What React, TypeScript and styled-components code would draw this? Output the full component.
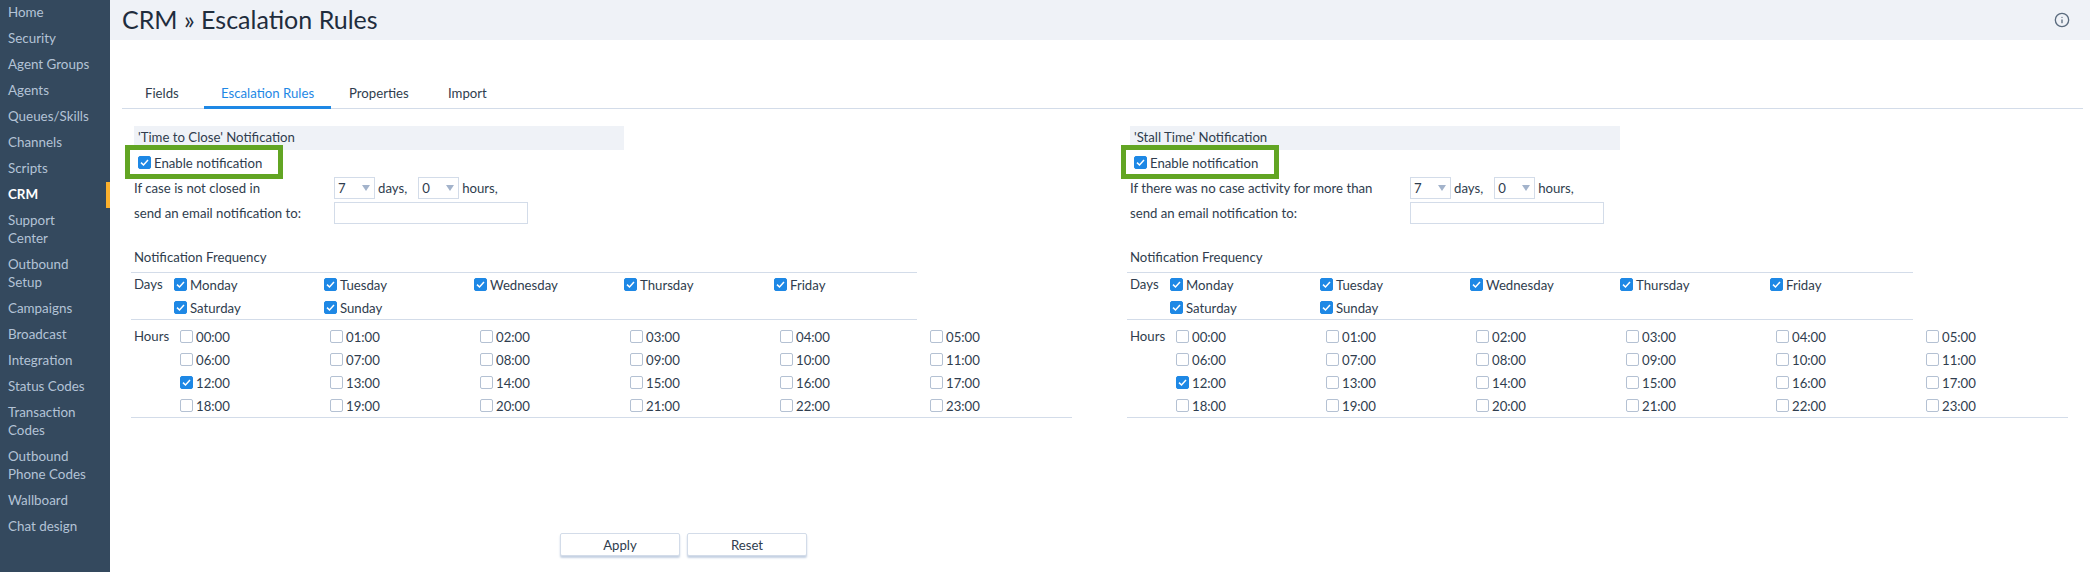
import React from 'react'
import styled, { createGlobalStyle } from 'styled-components'
import { Info } from 'lucide-react'

const GlobalStyle = createGlobalStyle`
  html, body {
    margin: 0;
    height: 100%;
    background: #fff;
    overflow: hidden;
    font-family: Lato, "Noto Sans", sans-serif;
    font-size: 13.2px;
    color: #2f3d4e;
  }
`

const menu = [
  'Home', 'Security', 'Agent Groups', 'Agents', 'Queues/Skills', 'Channels', 'Scripts', 'CRM',
  'Support Center', 'Outbound Setup', 'Campaigns', 'Broadcast', 'Integration', 'Status Codes',
  'Transaction Codes', 'Outbound Phone Codes', 'Wallboard', 'Chat design',
]
const tabs = [
  { label: 'Fields', width: 75 },
  { label: 'Escalation Rules', width: 127 },
  { label: 'Properties', width: 98 },
  { label: 'Import', width: 72 },
]
const days = ['Monday', 'Tuesday', 'Wednesday', 'Thursday', 'Friday', 'Saturday', 'Sunday']
const hours = Array.from({ length: 24 }, (_, i) => `${String(i).padStart(2, '0')}:00`)

const panels = [
  { title: "'Time to Close' Notification", label: 'If case is not closed in', labelWidth: 197 },
  { title: "'Stall Time' Notification", label: 'If there was no case activity for more than', labelWidth: 277 },
]

function Check({ checked }: { checked: boolean }) {
  return (
    <CheckBox $checked={checked}>
      {checked && (
        <svg width="9" height="9" viewBox="0 0 9 9" fill="none">
          <path d="M1 4.6 L3.5 7 L8 2" stroke="#fff" strokeWidth="1.5" />
        </svg>
      )}
    </CheckBox>
  )
}

function Dropdown({ value }: { value: string }) {
  return (
    <SelectBox>
      {value}
      <Caret />
    </SelectBox>
  )
}

function NotificationPanel({ title, label, labelWidth }: { title: string; label: string; labelWidth: number }) {
  return (
    <Panel>
      <Band>{title}</Band>
      <EnableRow>
        <Highlight />
        <Check checked />
        Enable notification
      </EnableRow>
      <FormRow $labelWidth={labelWidth}>
        <span>{label}</span>
        <Dropdown value="7" />
        <span>days,</span>
        <SecondSelect>
          <Dropdown value="0" />
        </SecondSelect>
        <span>hours,</span>
      </FormRow>
      <FormRow $labelWidth={labelWidth}>
        <span>send an email notification to:</span>
        <EmailInput />
      </FormRow>
      <SectionTitle>Notification Frequency</SectionTitle>
      <DaysTable>
        <RowLabel $width={40}>Days</RowLabel>
        <DaysGrid>
          {days.map((d) => (
            <CheckItem key={d}>
              <Check checked />
              {d}
            </CheckItem>
          ))}
        </DaysGrid>
      </DaysTable>
      <HoursTable>
        <RowLabel $width={46}>Hours</RowLabel>
        <HoursGrid>
          {hours.map((h) => (
            <CheckItem key={h}>
              <Check checked={h === '12:00'} />
              {h}
            </CheckItem>
          ))}
        </HoursGrid>
      </HoursTable>
    </Panel>
  )
}

export default function App() {
  return (
    <Page>
      <GlobalStyle />
      <Sidebar>
        {menu.map((item) => (
          <MenuItem key={item} $active={item === 'CRM'}>
            {item}
          </MenuItem>
        ))}
      </Sidebar>
      <Main>
        <Header>
          <Title>CRM » Escalation Rules</Title>
          <Info size={16} color="#5a6b7e" strokeWidth={2} />
        </Header>
        <Tabs>
          {tabs.map((t) => (
            <Tab key={t.label} $active={t.label === 'Escalation Rules'} $width={t.width}>
              {t.label}
            </Tab>
          ))}
        </Tabs>
        <Panels>
          {panels.map((p) => (
            <NotificationPanel key={p.title} {...p} />
          ))}
        </Panels>
        <Buttons>
          <ActionButton>Apply</ActionButton>
          <ActionButton>Reset</ActionButton>
        </Buttons>
      </Main>
    </Page>
  )
}

const Page = styled.div`
  display: flex;
  height: 572px;
`

const Sidebar = styled.nav`
  flex: 0 0 110px;
  background: #34495e;
`

const MenuItem = styled.div<{ $active?: boolean }>`
  padding: 3px 16px 5px 8px;
  line-height: 18px;
  font-size: 13.4px;
  color: ${(p) => (p.$active ? '#fff' : '#b3c3d6')};
  font-weight: ${(p) => (p.$active ? 700 : 400)};
  border-right: 4px solid ${(p) => (p.$active ? '#fbb02d' : 'transparent')};
`

const Main = styled.main`
  flex: 1;
  min-width: 0;
`

const Header = styled.header`
  height: 40px;
  background: #eff2f7;
  display: flex;
  align-items: center;
  justify-content: space-between;
  padding: 0 20px 0 12px;
`

const Title = styled.h1`
  margin: 0;
  padding-bottom: 3px;
  font-size: 25px;
  font-weight: 400;
  color: #1f2d3d;
`

const Tabs = styled.div`
  display: flex;
  gap: 1px;
  margin: 40px 7px 0 12px;
  padding-left: 6px;
  height: 28px;
  border-bottom: 1px solid #d3dce9;
`

const Tab = styled.div<{ $active?: boolean; $width: number }>`
  box-sizing: border-box;
  width: ${(p) => p.$width}px;
  padding-left: 17px;
  line-height: 26px;
  color: ${(p) => (p.$active ? '#1e88e5' : '#2f3d4e')};
  border-bottom: 3px solid ${(p) => (p.$active ? '#1e88e5' : 'transparent')};
  margin-bottom: -1px;
`

const Panels = styled.div`
  display: flex;
  margin-top: 17px;
  padding-left: 21px;
`

const Panel = styled.section`
  flex: 0 0 996px;
`

const Band = styled.div`
  width: 486px;
  height: 24px;
  margin-left: 3px;
  padding-left: 4px;
  line-height: 23px;
  background: #eff2f7;
`

const EnableRow = styled.div`
  position: relative;
  display: flex;
  align-items: center;
  gap: 3px;
  height: 25px;
  margin-left: 7px;
`

const Highlight = styled.div`
  position: absolute;
  left: -13px;
  top: -5px;
  width: 158px;
  height: 34px;
  box-sizing: border-box;
  border: 5px solid #62a523;
`

const CheckBox = styled.span<{ $checked: boolean }>`
  flex: none;
  box-sizing: border-box;
  width: 13px;
  height: 13px;
  display: inline-flex;
  align-items: center;
  justify-content: center;
  border-radius: 2px;
  background: ${(p) => (p.$checked ? '#1e88e5' : '#fff')};
  border: 1px solid ${(p) => (p.$checked ? '#1e88e5' : '#b4c1d3')};
`

const FormRow = styled.div<{ $labelWidth: number }>`
  display: grid;
  grid-template-columns: ${(p) => p.$labelWidth}px auto auto auto auto 1fr;
  align-items: center;
  column-gap: 3px;
  margin-left: 3px;
  height: 25px;
  width: 480px;
`

const SelectBox = styled.div`
  position: relative;
  box-sizing: border-box;
  width: 41px;
  height: 22px;
  padding-left: 3px;
  line-height: 20px;
  border: 1px solid #d3dce9;
`

const Caret = styled.i`
  position: absolute;
  right: 4px;
  top: 7px;
  border-left: 4px solid transparent;
  border-right: 4px solid transparent;
  border-top: 6px solid #a3b3cb;
`

const SecondSelect = styled.div`
  margin-left: 8px;
`

const EmailInput = styled.input`
  grid-column: 2 / span 5;
  box-sizing: border-box;
  width: 194px;
  height: 22px;
  border: 1px solid #d3dce9;
  background: #fff;
  outline: none;
`

const SectionTitle = styled.div`
  margin: 23px 0 0 3px;
  height: 24px;
  line-height: 18px;
`

const DaysTable = styled.div`
  display: flex;
  width: 783px;
  padding-left: 3px;
  border-top: 1px solid #d3dce9;
  border-bottom: 1px solid #d3dce9;
`

const HoursTable = styled.div`
  display: flex;
  width: 938px;
  padding: 5px 0 0 3px;
  border-bottom: 1px solid #d3dce9;
`

const RowLabel = styled.div<{ $width: number }>`
  flex: 0 0 ${(p) => p.$width}px;
  line-height: 23px;
`

const DaysGrid = styled.div`
  display: grid;
  grid-template-columns: repeat(5, 150px);
`

const HoursGrid = styled.div`
  display: grid;
  grid-template-columns: repeat(6, 150px);
`

const CheckItem = styled.label`
  display: flex;
  align-items: center;
  gap: 3px;
  height: 23px;
`

const Buttons = styled.div`
  display: flex;
  gap: 7px;
  margin: 115px 0 0 450px;
`

const ActionButton = styled.button`
  box-sizing: border-box;
  width: 120px;
  height: 23px;
  padding: 0;
  font: inherit;
  color: #2f3d4e;
  background: #fff;
  border: 1px solid #d3dce9;
  border-radius: 2px;
  box-shadow: 0 2px 2px #c5d1e3;
`
